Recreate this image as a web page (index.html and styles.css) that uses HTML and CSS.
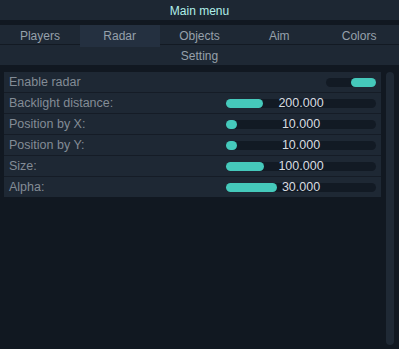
FILE: index.html
```html
<!DOCTYPE html>
<html lang="en">
<head>
    <meta charset="UTF-8">
    <meta name="viewport" content="width=device-width, initial-scale=1.0">
    <title>Main menu</title>
    <link rel="stylesheet" href="styles.css">
</head>
<body>

    <div class="title">Main menu</div>

    <div class="tabs">
        <div class="tab">Players</div>
        <div class="tab active">Radar</div>
        <div class="tab">Objects</div>
        <div class="tab">Aim</div>
        <div class="tab">Colors</div>
    </div>
    <div class="subtitle">Setting</div>

    <div class="content">
        <div class="panel">
            <div class="row">
                <span class="label">Enable radar</span>
                <div class="toggle"><div class="knob"></div></div>
            </div>
            <div class="row">
                <span class="label">Backlight distance:</span>
                <div class="slider">
                    <div class="fill" style="width: 37px"></div>
                    <span class="value">200.000</span>
                </div>
            </div>
            <div class="row">
                <span class="label">Position by X:</span>
                <div class="slider">
                    <div class="fill" style="width: 11px"></div>
                    <span class="value">10.000</span>
                </div>
            </div>
            <div class="row">
                <span class="label">Position by Y:</span>
                <div class="slider">
                    <div class="fill" style="width: 11px"></div>
                    <span class="value">10.000</span>
                </div>
            </div>
            <div class="row">
                <span class="label">Size:</span>
                <div class="slider">
                    <div class="fill" style="width: 38px"></div>
                    <span class="value">100.000</span>
                </div>
            </div>
            <div class="row">
                <span class="label">Alpha:</span>
                <div class="slider">
                    <div class="fill" style="width: 51px"></div>
                    <span class="value">30.000</span>
                </div>
            </div>
        </div>
        <div class="scrollbar"></div>
    </div>

</body>
</html>
```

FILE: styles.css
```css
body {
    font-family: "Liberation Sans", Arial, sans-serif;
    font-size: 12px;
    background-color: #111821;
    margin: 0;
    height: 349px;
    overflow: hidden;
}
.title {
    height: 20px;
    line-height: 22px;
    text-align: center;
    background-color: #1d2733;
    color: #b0efe9;
    margin-bottom: 5px;
}
.tabs {
    display: grid;
    grid-template-columns: repeat(5, 1fr);
    height: 19px;
    background-color: #1e2834;
    border-bottom: 1px solid #131a23;
}
.tab {
    line-height: 22px;
    text-align: center;
    color: #97a1ab;
}
.tab.active {
    background-color: #243040;
}
.subtitle {
    height: 20px;
    line-height: 22px;
    text-align: center;
    background-color: #1e2834;
    color: #97a1ab;
}
.content {
    display: flex;
    gap: 5px;
    padding: 7px 5px 4px 4px;
    height: 273px;
}
.panel {
    flex: 1;
    align-self: flex-start;
    display: flex;
    flex-direction: column;
    gap: 1px;
    background-color: #151c26;
}
.row {
    display: flex;
    align-items: center;
    justify-content: space-between;
    height: 20px;
    padding: 0 5px;
    background-color: #1e2834;
}
.label {
    color: #838c96;
    font-size: 12.5px;
}
.slider {
    position: relative;
    width: 150px;
    height: 9px;
    border-radius: 5px;
    background-color: #121a24;
}
.fill {
    height: 9px;
    border-radius: 5px;
    background-color: #45c9bb;
}
.value {
    position: absolute;
    left: 0;
    right: 0;
    top: -3px;
    line-height: 15px;
    text-align: center;
    color: #d8dce0;
    font-size: 12.5px;
}
.toggle {
    display: flex;
    justify-content: flex-end;
    width: 50px;
    height: 9px;
    border-radius: 5px;
    background-color: #121a24;
}
.knob {
    width: 25px;
    height: 9px;
    border-radius: 5px;
    background-color: #45c9bb;
}
.scrollbar {
    width: 8px;
    border-radius: 4px;
    background-color: #1f2935;
}
```
